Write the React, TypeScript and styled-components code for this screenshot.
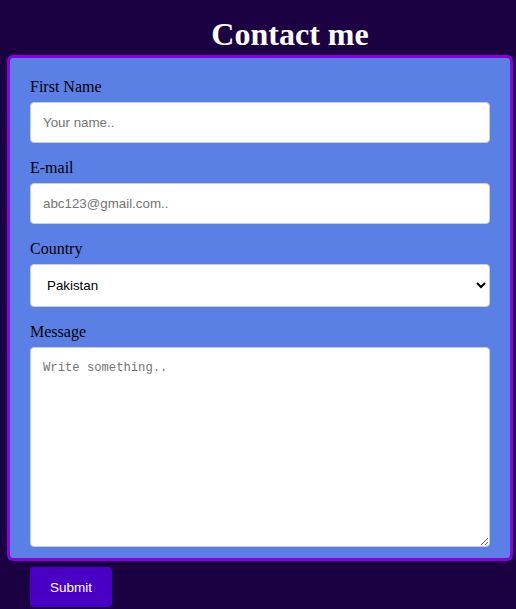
import React from "react";
import styled, { createGlobalStyle } from "styled-components";

const GlobalStyle = createGlobalStyle`
  html, body {
    margin: 0;
    padding: 0;
    background: #1b0042;
  }
  body {
    font-family: "Liberation Serif", "Times New Roman", serif;
  }
  * {
    box-sizing: border-box;
  }
`;

const Page = styled.div`
  width: 516px;
  min-height: 609px;
  background: #1b0042;
  overflow: hidden;
`;

const Title = styled.h1`
  margin: 16px 0 3px;
  padding-left: 64px;
  text-align: center;
  font-family: "Liberation Serif", "Times New Roman", serif;
  font-size: 32px;
  line-height: 36px;
  font-weight: bold;
  color: #ffffff;
`;

const Card = styled.form`
  margin-left: 7px;
  width: 506px;
  background: #5a80e6;
  border: 3px solid #8a00e0;
  border-radius: 6px;
  padding: 20px 20px 11px;
  display: flex;
  flex-direction: column;
`;

const Label = styled.label`
  display: block;
  font-family: "Liberation Serif", "Times New Roman", serif;
  font-size: 16px;
  line-height: 18px;
  color: #000;
  margin-bottom: 6px;
`;

const fieldBase = `
  display: block;
  width: 100%;
  border: 1px solid #cccccc;
  border-radius: 4px;
  background: #ffffff;
  padding: 12px;
  margin: 0;
  color: #000;
`;

const TextInput = styled.input`
  ${fieldBase}
  height: 41px;
  margin-bottom: 16px;
  font-family: "Liberation Sans", Arial, sans-serif;
  font-size: 13.333px;
  &::placeholder {
    color: #757575;
  }
`;

const Select = styled.select`
  ${fieldBase}
  height: 43px;
  margin-bottom: 16px;
  font-family: "Liberation Sans", Arial, sans-serif;
  font-size: 13.333px;
`;

const TextArea = styled.textarea`
  ${fieldBase}
  height: 200px;
  padding-top: 13px;
  font-family: "Liberation Mono", "DejaVu Sans Mono", monospace;
  font-size: 12.2px;
  resize: both;
  &::placeholder {
    color: #757575;
  }
`;

const Actions = styled.div`
  padding: 6px 0 0 30px;
`;

const SubmitButton = styled.button`
  height: 40px;
  padding: 0 20px;
  border: none;
  border-radius: 4px;
  background: #4a00c4;
  color: #ffffff;
  font-family: "Liberation Sans", Arial, sans-serif;
  font-size: 13.5px;
  cursor: pointer;
`;

export default function App() {
  return (
    <Page>
      <GlobalStyle />
      <Title>Contact me</Title>
      <Card onSubmit={(e) => e.preventDefault()}>
        <Label htmlFor="fname">First Name</Label>
        <TextInput id="fname" type="text" placeholder="Your name.." />
        <Label htmlFor="email">E-mail</Label>
        <TextInput id="email" type="text" placeholder="abc123@gmail.com.." />
        <Label htmlFor="country">Country</Label>
        <Select id="country" defaultValue="pakistan">
          <option value="pakistan">Pakistan</option>
          <option value="india">India</option>
          <option value="usa">USA</option>
        </Select>
        <Label htmlFor="message">Message</Label>
        <TextArea id="message" placeholder="Write something.." />
      </Card>
      <Actions>
        <SubmitButton type="button">Submit</SubmitButton>
      </Actions>
    </Page>
  );
}
